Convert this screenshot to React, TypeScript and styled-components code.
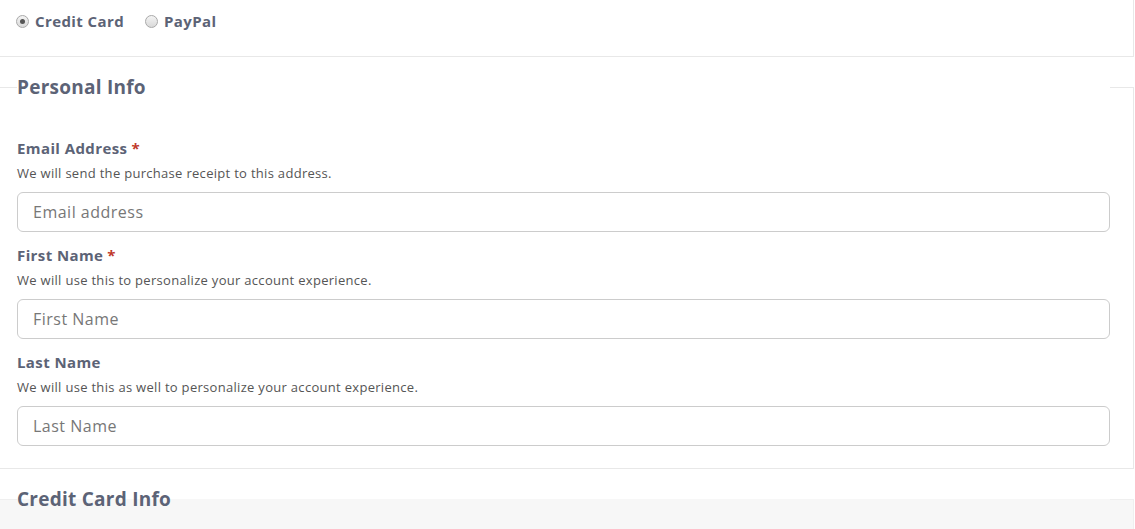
import React, { useState } from 'react'
import styled, { createGlobalStyle } from 'styled-components'

const GlobalStyle = createGlobalStyle`
  html, body {
    margin: 0;
    padding: 0;
    background: #ffffff;
  }
  body {
    font-family: "Open Sans", "Liberation Sans", sans-serif;
    color: #5c6376;
  }
`

const Page = styled.div`
  width: 1134px;
`

const MethodPanel = styled.div`
  height: 56px;
  border-right: 1px solid #e8e8e8;
  border-bottom: 1px solid #e8e8e8;
  padding: 0 16px;
  display: flex;
  align-items: center;
`

const MethodRow = styled.div`
  display: flex;
  align-items: center;
  gap: 21px;
  margin-top: -14px;
`

const RadioLabel = styled.label`
  display: flex;
  align-items: center;
  gap: 6px;
  font-size: 15px;
  font-weight: 700;
  letter-spacing: 0.4px;
  color: #5c6376;
  cursor: pointer;
`

const RadioDot = styled.span<{ $checked: boolean }>`
  width: 11px;
  height: 11px;
  border-radius: 50%;
  border: 1px solid #a9a9a9;
  background: linear-gradient(#f4f4f4, #d9d9d9);
  display: inline-flex;
  align-items: center;
  justify-content: center;
  &::after {
    content: '';
    width: 5px;
    height: 5px;
    border-radius: 50%;
    background: #555;
    display: ${p => (p.$checked ? 'block' : 'none')};
  }
`

const Section = styled.fieldset<{ $muted?: boolean }>`
  margin: 15px 0 0;
  padding: 0 23px 22px 17px;
  border: 1px solid ${p => (p.$muted ? '#efefef' : '#e8e8e8')};
  border-left: none;
  background: ${p => (p.$muted ? '#f7f7f7' : '#ffffff')};
  min-width: 0;
`

const Legend = styled.legend`
  padding: 0;
  width: 100%;
  font-size: 19px;
  font-weight: 700;
  line-height: 30px;
  letter-spacing: 0.25px;
  color: #5c6376;
`

const Fields = styled.div`
  display: flex;
  flex-direction: column;
  gap: 12px;
  padding-top: 35px;
`

const Field = styled.div`
  display: flex;
  flex-direction: column;
`

const Label = styled.label`
  font-size: 15px;
  font-weight: 700;
  line-height: 22px;
  letter-spacing: 0.4px;
  color: #5c6376;
`

const Required = styled.span`
  color: #c0392b;
  margin-left: 4px;
`

const Help = styled.div`
  font-size: 13px;
  line-height: 18px;
  letter-spacing: 0.3px;
  color: #555555;
  margin: 5px 0 10px;
`

const Input = styled.input`
  box-sizing: border-box;
  width: 100%;
  height: 40px;
  border: 1px solid #cccccc;
  border-radius: 6px;
  padding: 0 15px;
  font-family: inherit;
  font-size: 16px;
  letter-spacing: 0.5px;
  color: #333;
  background: #ffffff;
  outline: none;
  &::placeholder {
    color: #777777;
  }
`

const BottomSpace = styled.div`
  height: 40px;
`

const fields = [
  { id: 'email', label: 'Email Address', required: true, help: 'We will send the purchase receipt to this address.', placeholder: 'Email address' },
  { id: 'first', label: 'First Name', required: true, help: 'We will use this to personalize your account experience.', placeholder: 'First Name' },
  { id: 'last', label: 'Last Name', required: false, help: 'We will use this as well to personalize your account experience.', placeholder: 'Last Name' },
]

export default function App() {
  const [method, setMethod] = useState('card')

  return (
    <Page>
      <GlobalStyle />
      <MethodPanel>
        <MethodRow>
          <RadioLabel onClick={() => setMethod('card')}>
            <RadioDot $checked={method === 'card'} />
            Credit Card
          </RadioLabel>
          <RadioLabel onClick={() => setMethod('paypal')}>
            <RadioDot $checked={method === 'paypal'} />
            PayPal
          </RadioLabel>
        </MethodRow>
      </MethodPanel>

      <Section>
        <Legend>Personal Info</Legend>
        <Fields>
          {fields.map(f => (
            <Field key={f.id}>
              <Label htmlFor={f.id}>
                {f.label}
                {f.required && <Required>*</Required>}
              </Label>
              <Help>{f.help}</Help>
              <Input id={f.id} placeholder={f.placeholder} />
            </Field>
          ))}
        </Fields>
      </Section>

      <Section $muted>
        <Legend>Credit Card Info</Legend>
        <BottomSpace />
      </Section>
    </Page>
  )
}
